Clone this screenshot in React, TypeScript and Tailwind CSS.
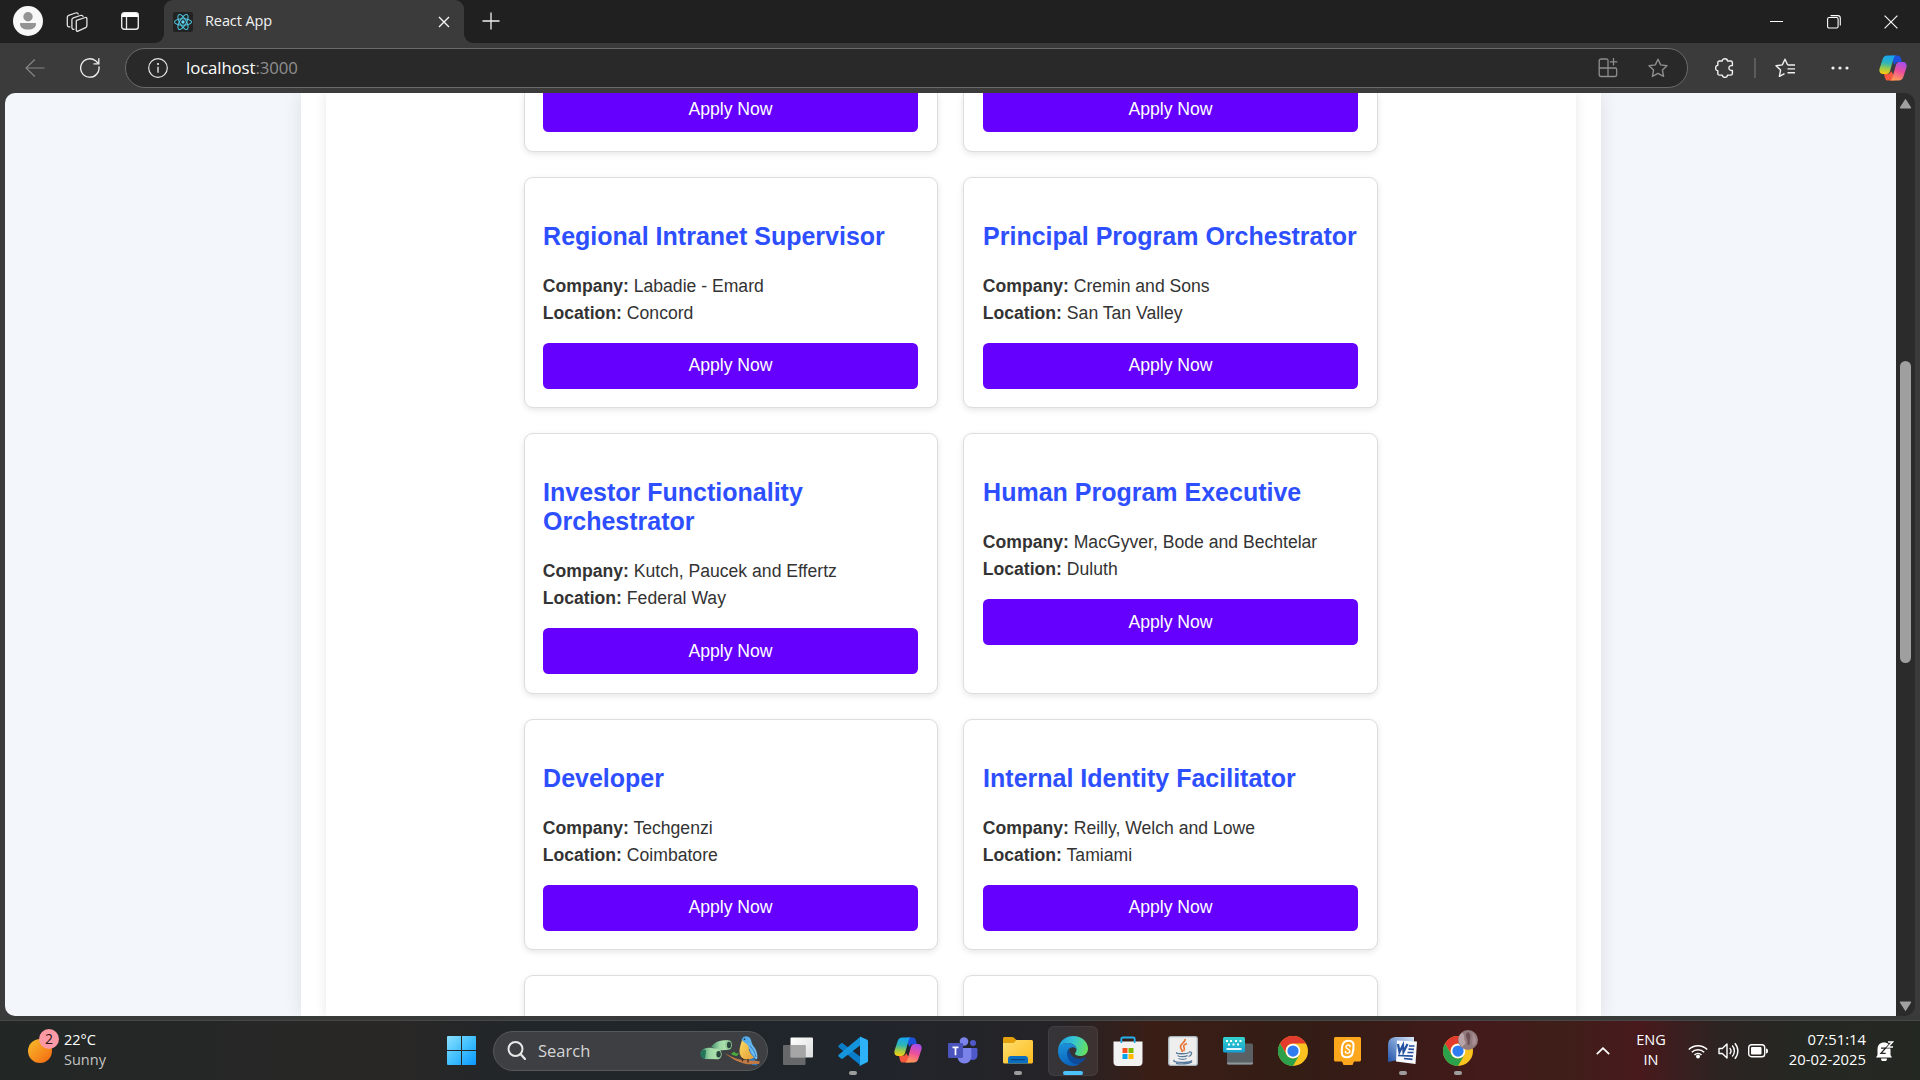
import React from "react";

type IconProps = { w: number; h: number; vb?: string; className?: string; children: React.ReactNode };

function Svg({ w, h, vb, className, children }: IconProps) {
  return (
    <svg width={w} height={h} viewBox={vb ?? `0 0 ${w} ${h}`} fill="none" className={className}>
      {children}
    </svg>
  );
}

function CopilotIcon({ size, id }: { size: number; id: string }) {
  return (
    <Svg w={size} h={size * 0.93} vb="0 0 28 26">
      <defs>
        <linearGradient id={id + "a"} x1="0.4" y1="0" x2="0.3" y2="1">
          <stop offset="0" stopColor="#17a5f2" />
          <stop offset="0.4" stopColor="#2fb5b8" />
          <stop offset="0.7" stopColor="#9ccb48" />
          <stop offset="1" stopColor="#ffcc10" />
        </linearGradient>
        <linearGradient id={id + "b"} x1="0.7" y1="0" x2="0.4" y2="1">
          <stop offset="0" stopColor="#a44ef0" />
          <stop offset="0.5" stopColor="#ee4f9a" />
          <stop offset="1" stopColor="#ff9b56" />
        </linearGradient>
      </defs>
      <path d="M12 .5h7c1.600 0 2.300 1 2.800 2.600L22.800 7h-3.500c-2 0-3 1-3.600 3L14 7Z" fill="#1d50dc" />
      <path d="M16 25.500H9c-1.700 0-2.500-1-3-2.600L5 19h3.500c2 0 3-1 3.600-3L14 19Z" fill="#f4583d" />
      <path d="M8.500.5H17c-1.500.4-2.100 1.800-2.600 3.500l-3.200 11.500C10.500 18 9.300 19 7.300 19H4.200C1 19-.2 16.800.6 13.400L3.500 4.500C4.300 1.800 5.800.5 8.500.5Z" fill={`url(#${id}a)`} />
      <path d="M19.500 25.500H11c1.500-.4 2.100-1.800 2.600-3.500l3.200-11.500C17.500 8 18.700 7 20.700 7h3.100c3.200 0 4.400 2.200 3.600 5.600l-2.900 8.900c-.8 2.700-2.300 4-5 4Z" fill={`url(#${id}b)`} />
    </Svg>
  );
}

function ReactLogo() {
  return (
    <span className="flex h-5 w-5 items-center justify-center rounded-[2px] bg-[#222222]">
      <Svg w={20} h={20} vb="-10 -10 20 20">
        <g stroke="#4fc3dc" strokeWidth="1.1">
          <ellipse rx="8.500" ry="3.300" />
          <ellipse rx="8.500" ry="3.300" transform="rotate(60)" />
          <ellipse rx="8.500" ry="3.300" transform="rotate(120)" />
        </g>
        <circle r="1.700" fill="#61dafb" />
      </Svg>
    </span>
  );
}

function TabStrip() {
  return (
    <div className="flex h-[43px] items-center bg-[#202020] text-[#f2f2f2]">
      <div className="flex w-14 justify-center pb-px">
        <Svg w={30} h={30}>
          <circle cx="15" cy="15" r="15" fill="#f8f8f8" />
          <circle cx="15" cy="10.700" r="4.700" fill="#939393" />
          <path d="M8 17h14c.6 0 1 .4 1 1 0 3.500-3 5.500-8 5.500S7 21.500 7 18c0-.6.4-1 1-1Z" fill="#939393" />
        </Svg>
      </div>
      <div className="flex w-[43px] justify-center pr-px">
        <Svg w={22} h={22}>
          <g stroke="#e4e4e4" strokeWidth="1.300" strokeLinejoin="round">
            <path d="m10.500 9.300 8.800-2.800c.9-.3 1.600.2 1.600 1.100v7.200c0 .9-.5 1.600-1.300 1.900l-7.600 3.400c-1 .4-1.700 0-1.700-1v-8.300c0-.7.100-1.200.2-1.500Z" />
            <path d="M8.500 18.200c-1.300.4-2.600-.2-2.600-1.600V8.800c0-1 .6-1.600 1.400-1.900l7-2.400c1.500-.5 2.700.1 2.800 1.500" />
            <path d="M4.300 15.700c-1.700.5-3-.2-3-1.700V6.300c0-1 .5-1.600 1.400-1.900L9.500 2c1.500-.5 2.700.1 2.800 1.500" />
          </g>
        </Svg>
      </div>
      <div className="flex w-[65px] justify-center pb-px pr-[4px]">
        <Svg w={18} h={18}>
          <rect x=".7" y=".7" width="16.600" height="16.600" rx="2.500" stroke="#e8e8e8" strokeWidth="1.400" />
          <path d="M1 3.200C1 2 2 1 3.200 1h11.600C16 1 17 2 17 3.200V5H1Z" fill="#fff" />
          <path d="M5.500 5v12" stroke="#e8e8e8" strokeWidth="1.300" />
        </Svg>
      </div>
      <div className="relative flex h-full w-[300px] items-center rounded-t-[9px] bg-[#3b3b3b] pl-[9px] pr-3.5">
        <Svg w={10} h={10} className="absolute -left-2.5 bottom-0">
          <path d="M10 0v10H0c6 0 10-4 10-10Z" fill="#3b3b3b" />
        </Svg>
        <Svg w={10} h={10} className="absolute -right-2.5 bottom-0">
          <path d="M0 0v10h10C4 10 0 6 0 0Z" fill="#3b3b3b" />
        </Svg>
        <ReactLogo />
        <span className="ml-3 flex-1 pb-[2px] text-[14.500px] leading-5 tracking-[-0.1px]">React App</span>
        <Svg w={12} h={12}>
          <path d="m1 1 10 10M11 1 1 11" stroke="#f5f5f5" strokeWidth="1.400" />
        </Svg>
      </div>
      <div className="flex w-[53px] justify-center pb-px">
        <Svg w={18} h={18}>
          <path d="M9 .5v17M.5 9h17" stroke="#f0f0f0" strokeWidth="1.300" />
        </Svg>
      </div>
      <div className="ml-auto flex items-center">
        <div className="flex w-[57px] justify-center">
          <Svg w={13} h={13}>
            <path d="M0 6.500h13" stroke="#fff" strokeWidth="1" />
          </Svg>
        </div>
        <div className="flex w-[57px] justify-center">
          <Svg w={14} h={14}>
            <rect x=".6" y="2.500" width="10.500" height="10.500" rx="1.500" stroke="#fff" strokeWidth="1.100" />
            <path d="M3.500.6h7.400c1.400 0 2.400 1 2.400 2.400v7.500" stroke="#fff" strokeWidth="1.100" />
          </Svg>
        </div>
        <div className="flex w-[58px] justify-center">
          <Svg w={14} h={14}>
            <path d="m.6.6 12.800 12.800M13.400.6.6 13.400" stroke="#f5f5f5" strokeWidth="1.200" />
          </Svg>
        </div>
      </div>
    </div>
  );
}

const STAR = "M10 1.200 12.700 6.900 19 7.700 14.400 12 15.600 18.400 10 15.300 4.400 18.400 5.600 12 1 7.700 7.300 6.900Z";

function Toolbar() {
  return (
    <div className="flex h-[50px] items-center bg-[#3b3b3b]">
      <div className="flex w-[70px] justify-center">
        <Svg w={20} h={20}>
          <path d="M19.500 10H1M9.800 1.500 1 10l8.800 8.500" stroke="#858585" strokeWidth="1.200" />
        </Svg>
      </div>
      <div className="flex w-[40px] justify-center">
        <Svg w={20} h={20}>
          <path d="M18.900 8.300A9.200 9.200 0 1 1 15.600 2.800L18.500 5.500" stroke="#f0f0f0" strokeWidth="1.300" />
          <path d="M18.800.3v5.500h-5.300" stroke="#f0f0f0" strokeWidth="1.300" />
        </Svg>
      </div>
      <div className="ml-[15px] flex h-10 w-[1563px] items-center rounded-full border border-[#6b6b6b] bg-[#292929] pl-[22px] pr-[19px]">
        <Svg w={20} h={20}>
          <circle cx="10" cy="10" r="9.300" stroke="#e6e6e6" strokeWidth="1.200" />
          <circle cx="10" cy="6" r="1.100" fill="#e6e6e6" />
          <path d="M10 8.700v6" stroke="#e6e6e6" strokeWidth="1.400" />
        </Svg>
        <span className="ml-[18px] flex-1 pb-px text-[16.800px] leading-6 tracking-[-0.1px] text-white">
          localhost<span className="text-[#8f8f8f]">:3000</span>
        </span>
        <Svg w={20} h={20} className="mr-[30px]">
          <path d="M9 1H3.200C2 1 1.200 1.800 1.200 3v13.500c0 1.200.8 2 2 2h13.500c1.200 0 2-.8 2-2v-5c0-1-.6-1.500-1.500-1.500H1.200M10 10v8.500M10 10V2.500C10 1.500 9.500 1 8.500 1" stroke="#8d8d8d" strokeWidth="1.300" />
          <path d="M15.500 0v7.500M11.800 3.800h7.500" stroke="#8d8d8d" strokeWidth="1.300" />
        </Svg>
        <Svg w={20} h={20}>
          <path d={STAR} stroke="#8d8d8d" strokeWidth="1.400" strokeLinejoin="round" />
        </Svg>
      </div>
      <div className="flex w-[72px] justify-center pl-px">
        <Svg w={20} h={20}>
          <path
            d="M4.500 3H7.300C7.300 1.500 8.500.7 9.900.7S12.500 1.500 12.500 3h3.200c1 0 1.700.7 1.700 1.700v2.800c-1.800-.2-3.500.7-3.500 2.500s1.700 2.700 3.500 2.500v2.900c0 1-.7 1.700-1.700 1.700h-3.200c0 1.500-1.200 2.300-2.600 2.300s-2.600-.8-2.600-2.300H4.500c-1 0-1.700-.7-1.700-1.700v-2.800C1.400 12.600.6 11.400.6 10s.8-2.600 2.200-2.600V4.700C2.800 3.700 3.500 3 4.500 3Z"
            stroke="#f0f0f0"
            strokeWidth="1.400"
            strokeLinejoin="round"
          />
        </Svg>
      </div>
      <div className="ml-[-6px] h-5 w-0.5 bg-[#5c5c5c]" />
      <div className="ml-[19px]">
        <Svg w={21} h={20}>
          <path
            d="M12.700 7 10 1.200 7.300 6.900 1 7.700 5.600 12 4.400 18.400 9.500 15.600M12.700 7h7.300M12.500 10.900h7.500M12.500 14.800h7.500"
            stroke="#f0f0f0"
            strokeWidth="1.400"
            strokeLinejoin="round"
          />
        </Svg>
      </div>
      <div className="ml-[35px]">
        <Svg w={18} h={4}>
          <circle cx="2" cy="2" r="1.600" fill="#f0f0f0" />
          <circle cx="9" cy="2" r="1.600" fill="#f0f0f0" />
          <circle cx="16" cy="2" r="1.600" fill="#f0f0f0" />
        </Svg>
      </div>
      <div className="ml-[30px]">
        <CopilotIcon size={28} id="top" />
      </div>
    </div>
  );
}

type Job = { title: string; company: string; location: string; raised?: boolean };

function JobCard({ job }: { job: Job }) {
  return (
    <div className="flex flex-col rounded-[9px] border border-[#dddddd] bg-white pb-[18px] pl-[18px] pt-[44px] shadow-[0_2px_6px_rgba(0,0,0,0.1)] even:pl-[19px]">
      <h3 className="w-[376px] pl-[0.600px] text-[25px] font-bold leading-[29px] text-[#2d4fff]">{job.title}</h3>
      <div className="mt-[22px] pl-[0.300px] text-[17.600px] leading-[27px] text-[#333333]">
        <p>
          <strong>Company:</strong> {job.company}
        </p>
        <p>
          <strong>Location:</strong> {job.location}
        </p>
      </div>
      <button
        className={
          job.raised
            ? "mt-4 h-[46px] w-[375px] shrink-0 rounded-[5.500px] bg-[#6500ff] pb-[2px] pl-px text-center text-[17.600px] leading-[20px] text-white"
            : "mt-4 h-[46px] w-[375px] shrink-0 rounded-[5.500px] bg-[#6500ff] pl-px text-center text-[17.600px] leading-[20px] text-white"
        }
      >
        Apply Now
      </button>
    </div>
  );
}

const JOBS: Job[] = [
  { title: "Regional Intranet Supervisor", company: "Labadie - Emard", location: "Concord", raised: true },
  { title: "Principal Program Orchestrator", company: "Cremin and Sons", location: "San Tan Valley", raised: true },
  { title: "Investor Functionality Orchestrator", company: "Kutch, Paucek and Effertz", location: "Federal Way" },
  { title: "Human Program Executive", company: "MacGyver, Bode and Bechtelar", location: "Duluth" },
  { title: "Developer", company: "Techgenzi", location: "Coimbatore", raised: true },
  { title: "Internal Identity Facilitator", company: "Reilly, Welch and Lowe", location: "Tamiami", raised: true },
];

function CardTail() {
  return (
    <div className="flex flex-col justify-end rounded-b-[9px] border border-t-0 border-[#dddddd] bg-white pb-[19px] pl-[18px] shadow-[0_2px_6px_rgba(0,0,0,0.1)] even:pl-[19px]">
      <button className="h-[39px] w-[375px] rounded-b-[5.500px] bg-[#6500ff] pb-[7px] pl-px text-center text-[17.600px] leading-[20px] text-white">
        Apply Now
      </button>
    </div>
  );
}

function CardHead() {
  return <div className="rounded-t-[9px] border border-b-0 border-[#dddddd] bg-white shadow-[0_2px_6px_rgba(0,0,0,0.1)]" />;
}

function Page() {
  return (
    <main className="flex h-full flex-1 justify-center overflow-hidden rounded-l-[10px] bg-[#f3f7fc]">
      <div className="w-[1300px] bg-white px-[25px] shadow-[0_0_17px_rgba(0,0,0,0.1)]">
        <div className="h-full bg-white px-[198px] shadow-[0_0_11px_rgba(0,0,0,0.1)]">
          <div className="grid h-full grid-cols-[414px_415px] grid-rows-[59px_231px_261px_231px_80px] gap-x-[25px] gap-y-[25px] font-['Liberation_Sans',Arial,sans-serif]">
            <CardTail />
            <CardTail />
            {JOBS.map((job) => (
              <JobCard key={job.title} job={job} />
            ))}
            <CardHead />
            <CardHead />
          </div>
        </div>
      </div>
    </main>
  );
}

function ScrollBar() {
  return (
    <div className="flex h-full w-[19px] flex-col items-center rounded-r-[10px] bg-[#2b2b2b]">
      <Svg w={13} h={11} className="mt-[5px]">
        <path d="M6.500.8 12 9.300c.3.600 0 1.200-.7 1.200H1.700c-.7 0-1-.6-.7-1.200Z" fill="#a0a0a0" />
      </Svg>
      <div className="mt-[252px] h-[302px] w-[11px] rounded-full bg-[#9f9f9f]" />
      <Svg w={13} h={11} className="mb-[4px] mt-auto">
        <path d="M6.500 10.200 12 1.700c.3-.6 0-1.200-.7-1.200H1.700c-.7 0-1 .6-.7 1.200Z" fill="#a0a0a0" />
      </Svg>
    </div>
  );
}

function StartIcon() {
  return (
    <Svg w={29} h={29}>
      <defs>
        <linearGradient id="start" x1="0" y1="0" x2="29" y2="29" gradientUnits="userSpaceOnUse">
          <stop stopColor="#8be0ff" />
          <stop offset=".5" stopColor="#42c0ff" />
          <stop offset="1" stopColor="#0a98ff" />
        </linearGradient>
      </defs>
      <path d="M1 0h13v14H0V1a1 1 0 0 1 1-1ZM15 0h13a1 1 0 0 1 1 1v13H15ZM0 15h14v14H1a1 1 0 0 1-1-1ZM15 15h14v13a1 1 0 0 1-1 1H15Z" fill="url(#start)" />
    </Svg>
  );
}

function BirdArt() {
  return (
    <Svg w={60} h={32}>
      <defs>
        <linearGradient id="bino" x1="0" y1="0" x2="1" y2="0">
          <stop stopColor="#3f8f68" />
          <stop offset=".5" stopColor="#9bd6a5" />
          <stop offset="1" stopColor="#b5e8b0" />
        </linearGradient>
        <linearGradient id="belly" x1="0" y1="0" x2="1" y2="1">
          <stop stopColor="#f9dc62" />
          <stop offset="1" stopColor="#e59a35" />
        </linearGradient>
        <linearGradient id="wing" x1="0" y1="0" x2="1" y2="1">
          <stop stopColor="#4aa3e6" />
          <stop offset="1" stopColor="#7cc4f2" />
        </linearGradient>
      </defs>
      <path d="M11 12C15 6 21 5 28 5.200v9.600l-8 .7Z" fill="url(#bino)" />
      <ellipse cx="28.500" cy="10" rx="3.400" ry="4.800" fill="#8fc797" />
      <ellipse cx="29" cy="10" rx="2" ry="3.200" fill="#28443c" />
      <path d="M1.500 16c3-4.500 9-3.500 17-2v10.200L5 24c-4-1-5-4.500-3.500-8Z" fill="url(#bino)" />
      <path d="M1 16.500c2-2 4-2 5-1l-1 8.500c-4-.6-5.500-4-4-7.500Z" fill="#24745a" />
      <ellipse cx="18" cy="19.300" rx="3.600" ry="5" fill="#a5dba8" />
      <ellipse cx="18.600" cy="19.300" rx="2.200" ry="3.300" fill="#28443c" />
      <path d="M51 20c3 2 5 6 6.500 10.500L52 30l-4-7Z" fill="#2a78c4" />
      <path d="M25 18.500c6 2.500 10 5.500 18 6.500 6 .5 11 .3 17 1.500l-1 2.500c-6-.5-9 .8-13 0-8-1.500-15-6-21-10.500Z" fill="#c07a45" />
      <path d="m31 19 3-2.500 2 2 3-.5-2 3-3-.6Z" fill="#4cae38" />
      <path d="M42 5c-1 4-2.500 7-2.500 11 0 5 3 8.500 7.500 8.500 4 0 7-1.500 8-3L50 6Z" fill="url(#belly)" />
      <path d="M41.500 4.500C43-.3 50 .2 51 5c.6 3 1.500 5 3.500 7.500 2.500 3.500 3.500 8 2.500 12-4-2-7-6-8-11-.5-2.500-1.500-4-3-5-1.500-.8-3-2-4.500-4Z" fill="url(#wing)" />
      <path d="M50 11c3 3 5 6 6 11M49 14c1 4 3 6 6 8.500" stroke="#2a6fb5" strokeWidth=".8" />
      <path d="m41.500 4.500-1.500-3.500 3 1.500Z" fill="#3b4a58" />
      <circle cx="44.500" cy="4.300" r=".8" fill="#152c47" />
      <path d="M42.500 23v3.500M48 24v3.500" stroke="#4a2e22" strokeWidth="1.300" />
    </Svg>
  );
}

function TaskViewIcon() {
  return (
    <Svg w={30} h={28}>
      <defs>
        <linearGradient id="tv" x1="0" y1="0" x2="1" y2="1">
          <stop stopColor="#fff" />
          <stop offset="1" stopColor="#dcdcdc" />
        </linearGradient>
      </defs>
      <rect x="7.500" y=".5" width="22.500" height="20" rx="1" fill="url(#tv)" />
      <rect x="0" y="8" width="22.500" height="20" rx="1" fill="#777" fillOpacity=".82" />
      <path d="M7.500 8h15v12.500h-15Z" fill="#a6a6a6" />
    </Svg>
  );
}

function VsCodeIcon() {
  return (
    <Svg w={30} h={30}>
      <path d="M.6 9.500 3 7.400c.6-.5 1.300-.4 1.900 0L22 20.500V29L.7 11.200c-.6-.5-.6-1.200-.1-1.700Z" fill="#0b7dc8" />
      <path d="M.6 20.500 3 22.600c.6.500 1.300.4 1.900 0L22 9.500V1L.7 18.800c-.6.500-.6 1.200-.1 1.700Z" fill="#1494dc" />
      <path d="M22 .4 28.700 3.400c.8.4 1.300 1 1.300 1.900v19.400c0 .9-.5 1.500-1.300 1.900L22 29.800c-.5.100-1 0-1.300-.3.700.3 1.300-.1 1.300-.9Z" fill="#2db1f7" />
    </Svg>
  );
}

function TeamsIcon() {
  return (
    <Svg w={30} h={27}>
      <circle cx="25" cy="6" r="3" fill="#5059c9" />
      <circle cx="16" cy="4.500" r="4.300" fill="#7b83eb" />
      <path d="M20 11h8c1 0 1.500.6 1.500 1.500V18c0 3-2 5-5 5-2 0-3.500-1-4.500-3Z" fill="#5059c9" />
      <path d="M10 11h12c.9 0 1.400.6 1.400 1.400V19c0 4.500-3 7.500-7 7.500s-7-3-7-7.500Z" fill="#7b83eb" />
      <rect x="0" y="6" width="15" height="15" rx="1.200" fill="#4b53bc" />
      <path d="M4.500 10.300h6M7.500 10.300v8" stroke="#fff" strokeWidth="1.700" />
    </Svg>
  );
}

function FolderIcon() {
  return (
    <Svg w={30} h={27}>
      <defs>
        <linearGradient id="fold" x1="0" y1="0" x2="1" y2="1">
          <stop stopColor="#ffdf70" />
          <stop offset="1" stopColor="#fdbb1c" />
        </linearGradient>
      </defs>
      <path d="M0 1.500C0 .7.700 0 1.500 0H9c1 0 1.600.3 2.200.9L13.500 3H28c1.200 0 2 .8 2 2v5H0Z" fill="#e5a00d" />
      <path d="M0 6h9.500c1 0 1.600-.3 2.200-1L13.500 3H28c1.200 0 2 .8 2 2v20c0 .8-.7 1.500-1.500 1.500h-27C.7 26.500 0 25.800 0 25Z" fill="url(#fold)" />
      <path d="M5 26.500V22c0-1.700 1-3 2.800-3h14.400c1.800 0 2.800 1.300 2.800 3v4.500Z" fill="#0d6fc2" />
      <path d="M8.500 22.700h13" stroke="#06457f" strokeWidth="1.300" strokeLinecap="round" />
    </Svg>
  );
}

function EdgeIcon() {
  return (
    <Svg w={30} h={30}>
      <defs>
        <linearGradient id="e1" x1="0" y1=".3" x2="1" y2=".5">
          <stop stopColor="#1b9de2" />
          <stop offset=".5" stopColor="#36c6d3" />
          <stop offset="1" stopColor="#66e05e" />
        </linearGradient>
        <linearGradient id="e2" x1=".3" y1="0" x2=".5" y2="1">
          <stop stopColor="#1c93dc" />
          <stop offset="1" stopColor="#0b62ba" />
        </linearGradient>
      </defs>
      <path d="M0 14C1 5.500 7 0 15 0c9 0 15 6 15 12.500 0 5-3.500 7.500-7.500 7.500-3.500 0-5.500-1.200-5.500-2.500 0-.8 1.500-1.500 1.500-4C18.500 9.500 14 7 9.500 7 4.500 7 1 10 0 14Z" fill="url(#e1)" />
      <path d="M0 15C0 10 4 7 9.500 7c5 0 9 3 9 6.500-1-1.700-3-2.500-5-2-4 1-5 5-3.500 9 2 5 7 7.500 11.500 7.500-2 1.300-4 2-6.500 2C6.500 30 0 23.500 0 15Z" fill="url(#e2)" />
      <path d="M11 13c-4 5-1 12.500 5 15 3.500 1 8-1 11.300-5.500.4-.6 0-1-.7-.7-6 3-14.600.2-15.600-8.800Z" fill="#0d4c9c" />
    </Svg>
  );
}

function StoreIcon() {
  return (
    <Svg w={30} h={30}>
      <path d="M.5 5.500h29V26c0 2.500-1.500 4-4 4h-21c-2.500 0-4-1.500-4-4Z" fill="#f2f2f2" />
      <path d="M8.300 7V3c0-1 .6-1.500 1.500-1.500h10.400c.9 0 1.500.5 1.500 1.500v4" stroke="#28b0ee" strokeWidth="1.800" />
      <path d="M9.500 12h5v5h-5Z" fill="#f25022" />
      <path d="M15.500 12h5v5h-5Z" fill="#7fba00" />
      <path d="M9.500 18h5v5h-5Z" fill="#00a4ef" />
      <path d="M15.500 18h5v5h-5Z" fill="#ffb900" />
    </Svg>
  );
}

function JavaIcon() {
  return (
    <Svg w={30} h={30}>
      <rect x=".7" y=".7" width="28.600" height="28.600" rx="2" fill="#eeeeee" stroke="#a8b6bd" strokeWidth="1.300" />
      <path d="M17 3c1 3-5 4.500-4.500 8 .2 1.600 2 3 1.500 5M19 7.500c-3 1-4 2.500-3 4 .8 1.200.5 2.500-.5 3.700" stroke="#e8773a" strokeWidth="1.700" />
      <path d="M9 16.500c-3 1.500 9 1.800 12 .2M9.500 19.500c1 1.500 8 1.500 10 0M10.500 22.500c2 1 6 1 8 0M21 16c4-.5 3 3.500-.5 4.500M6.500 24c-5 2.500 15 3.500 17.500.5M8 27.300c5 1 13 .6 16-1.300" stroke="#58799b" strokeWidth="1.300" />
    </Svg>
  );
}

function KeyboardIcon() {
  return (
    <Svg w={30} h={28}>
      <defs>
        <linearGradient id="kb" x1="0" y1="0" x2="0" y2="1">
          <stop stopColor="#34d4cf" />
          <stop offset="1" stopColor="#159ed0" />
        </linearGradient>
      </defs>
      <rect x="4" y="6.500" width="26" height="21" rx="1.500" fill="#5a6064" />
      <path d="M4 25.500h26V26a1.500 1.500 0 0 1-1.500 1.500h-23A1.500 1.500 0 0 1 4 26Z" fill="#8d969b" />
      <rect width="22" height="15.500" rx="1.500" fill="url(#kb)" />
      <path d="M3 4h2M7 4h2M12 4h2M16.500 4h2M5 7.500h2M9.500 7.500h2M14 7.500h2" stroke="#fff" strokeWidth="2" />
      <path d="M3.500 12h15" stroke="#fff" strokeWidth="1.800" />
    </Svg>
  );
}

function ChromeIcon() {
  return (
    <Svg w={30} h={30} vb="0 0 48 48">
      <circle cx="24" cy="24" r="24" fill="#fbc31f" />
      <path d="M3.200 12A24 24 0 0 1 44.800 12H24A12 12 0 0 0 13.600 30Z" fill="#e33b2e" />
      <path d="M3.200 12 13.600 30A12 12 0 0 0 34.400 30L24 48A24 24 0 0 1 3.200 12Z" fill="#2da04b" />
      <circle cx="24" cy="24" r="11.600" fill="#fff" />
      <circle cx="24" cy="24" r="9" fill="#2f7cf0" />
    </Svg>
  );
}

function ScratchIcon() {
  return (
    <Svg w={27} h={28}>
      <path d="M1.500 0h24c.8 0 1.500.7 1.500 1.500V23c0 .8-.7 1.500-1.500 1.500H20L18.500 28h-9L8 24.500H1.500C.7 24.500 0 23.800 0 23V1.500C0 .7.700 0 1.500 0Z" fill="#fea61c" />
      <path d="M10.500 4.800c3.500-2 8.500-1.300 9 2.400.3 4-.3 7.500-1.300 10.300-1.500 3.300-8.700 3.700-10 .3-.8-3.300-.8-10.300 2.300-13Z" stroke="#fff" strokeWidth="2" />
      <path d="M16 7.800v2.400M16 8.700c-1.700-1.300-4-.4-4 1.300 0 2.600 4 1.800 4 4.300 0 2-3 2.500-4.500 1.200v-1.800" stroke="#fff" strokeWidth="1.400" />
    </Svg>
  );
}

function WordIcon() {
  return (
    <Svg w={30} h={30}>
      <defs>
        <linearGradient id="wd" x1="1" y1="0" x2="0" y2="1">
          <stop stopColor="#dce8f8" />
          <stop offset=".55" stopColor="#6d93cf" />
          <stop offset="1" stopColor="#2454a8" />
        </linearGradient>
      </defs>
      <path d="M7 1h19v5l-16 18-10 2V10C0 4 2 2 7 1Z" fill="url(#wd)" />
      <path d="m9 4.500 20 1-1.500 22.500L8 25.500Z" fill="#f7f9fc" />
      <path d="m10 8 1.500 8L15 9l.5 7L19.500 8" stroke="#2450a0" strokeWidth="2.200" />
      <path d="M21 10h5.500M20.500 13.200l5.500.2M19.500 16.500h6M10 19.500l15 .7M16 22.500l8.500.9" stroke="#2450a0" strokeWidth="1.700" />
    </Svg>
  );
}

function ChromeProfileIcon() {
  return (
    <span className="relative block">
      <ChromeIcon />
      <Svg w={20} h={20} className="absolute left-[15.500px] top-[-6px]">
        <circle cx="10" cy="10" r="10" fill="#927b7e" />
        <path d="M4 3c4 2 1 6 3 8s-1 4-3 6C0 13-1 6 4 3Z" fill="#b9a5a8" />
        <path d="M10 2c2 1 3 4 2 7s1 4-1 6c-2 1-1-3-2-6s-2-5 1-7Z" fill="#6d4f54" />
        <path d="M14 3c3 2 5 6 4 10l-3 3c-2-4 1-8-1-13Z" fill="#a98f92" />
      </Svg>
    </span>
  );
}

function TaskCell({ children, active, running }: { children: React.ReactNode; active?: boolean; running?: boolean }) {
  return (
    <div className="flex w-[55px] justify-center">
      <div
        className={
          active
            ? "relative flex h-[50px] w-[50px] items-center justify-center rounded-[6px] border border-white/5 bg-white/8"
            : "relative flex h-[50px] w-[50px] items-center justify-center"
        }
      >
        {children}
        {active && <span className="absolute bottom-0 left-[14px] h-1 w-5 rounded-full bg-[#4cc2ff]" />}
        {running && <span className="absolute bottom-px left-[21px] h-1 w-2 rounded-full bg-[#9d9d9d]" />}
      </div>
    </div>
  );
}

function SystemTray() {
  return (
    <div className="ml-auto flex h-full items-center text-white">
      <Svg w={14} h={8}>
        <path d="m.8 7.200 6.200-6 6.200 6" stroke="#fff" strokeWidth="1.800" />
      </Svg>
      <div className="ml-[26px] w-[30px] pb-px text-center text-[14.500px] leading-5">
        <div className="-mx-2">ENG</div>
        <div>IN</div>
      </div>
      <Svg w={20} h={16} className="ml-[22px]">
        <path d="M.8 6.500a13 13 0 0 1 18.400 0M3.800 9.300a8.800 8.800 0 0 1 12.400 0M6.500 12a5 5 0 0 1 7 0" stroke="#fff" strokeWidth="1.500" />
        <circle cx="10" cy="13.600" r="2" fill="#fff" />
      </Svg>
      <Svg w={21} h={18} className="ml-[10px]">
        <path d="M1 6.500h3.300L9 2v14l-4.700-4.500H1Z" stroke="#fff" strokeWidth="1.400" strokeLinejoin="round" />
        <path d="M11.700 6a4.500 4.500 0 0 1 0 6M14.200 3.500a8 8 0 0 1 0 11M16.800 1.200a11.500 11.500 0 0 1 0 15.600" stroke="#fff" strokeWidth="1.400" />
      </Svg>
      <Svg w={20} h={14} className="ml-[9px]">
        <rect x=".7" y=".7" width="16" height="12" rx="2.800" stroke="#fff" strokeWidth="1.400" />
        <rect x="3" y="3" width="10.500" height="7.500" rx="1" fill="#fff" />
        <path d="M18 4.500c1.500.3 2 1 2 2.500s-.5 2.200-2 2.500Z" fill="#fff" />
      </Svg>
      <div className="ml-[19px] w-[79px] whitespace-nowrap pb-[3px] text-right text-[14.800px] leading-5">
        <div>07:51:14</div>
        <div className="-ml-3">20-02-2025</div>
      </div>
      <Svg w={18} h={20} className="ml-[10px] mr-[26px]">
        <path d="M1.500 14V8.500C1.500 4 4 1.500 8 1.500S14.500 4 14.500 8.500V14l1.500 2.500H0Z" fill="#fff" />
        <path d="M5 17.500h6a3 3 0 0 1-6 0Z" fill="#fff" />
        <path d="M5 7.200h4.500L5 12.300h4.700" stroke="#252525" strokeWidth="1.300" />
        <path d="M12 1h4.500L12 6h5" stroke="#252525" strokeWidth="3" />
        <path d="M12 1h4.500L12 6h5" stroke="#fff" strokeWidth="1.400" />
      </Svg>
    </div>
  );
}

function Taskbar() {
  return (
    <footer className="flex h-[59px] items-center bg-[linear-gradient(90deg,#222726_0px,#262726_250px,#292726_400px,#21262a_520px,#20252b_850px,#252327_1060px,#3a1e16_1150px,#331d15_1300px,#3a1b17_1400px,#441a1b_1480px,#3e1e18_1560px,#48191c_1640px,#2c2422_1720px,#252722_1800px,#242823_1920px)]">
      <div className="flex w-[433.500px] items-center pl-7 text-[14.500px] leading-5">
        <div className="relative mr-[12px] h-6 w-6 rounded-full bg-linear-to-br from-[#f5bd2c] to-[#f36310]">
          <span className="absolute -top-[10px] left-[11px] flex h-5 w-5 items-center justify-center rounded-full bg-[#fd99a4] text-[14px] leading-none text-[#2a1416]">
            2
          </span>
        </div>
        <div className="pb-[2px]">
          <div className="text-white">22°C</div>
          <div className="text-[#c4c4c4]">Sunny</div>
        </div>
      </div>
      <TaskCell>
        <StartIcon />
      </TaskCell>
      <div className="ml-[4.500px] mr-[2px] flex h-10 w-[275px] items-center rounded-full border border-[#56585a] bg-[#3d3f42] pl-[13px] pr-[7px]">
        <Svg w={19} h={19}>
          <circle cx="8.500" cy="8" r="7" stroke="#e8e8e8" strokeWidth="2" />
          <path d="m13.500 13 4.500 5" stroke="#e8e8e8" strokeWidth="2.200" strokeLinecap="round" />
        </Svg>
        <span className="ml-[12px] flex-1 text-[16.500px] leading-6 text-[#d6d6d6]">Search</span>
        <BirdArt />
      </div>
      <TaskCell>
        <TaskViewIcon />
      </TaskCell>
      <TaskCell running>
        <VsCodeIcon />
      </TaskCell>
      <TaskCell>
        <CopilotIcon size={28} id="task" />
      </TaskCell>
      <TaskCell>
        <TeamsIcon />
      </TaskCell>
      <TaskCell running>
        <FolderIcon />
      </TaskCell>
      <TaskCell active>
        <EdgeIcon />
      </TaskCell>
      <TaskCell>
        <StoreIcon />
      </TaskCell>
      <TaskCell>
        <JavaIcon />
      </TaskCell>
      <TaskCell>
        <KeyboardIcon />
      </TaskCell>
      <TaskCell>
        <ChromeIcon />
      </TaskCell>
      <TaskCell>
        <ScratchIcon />
      </TaskCell>
      <TaskCell running>
        <WordIcon />
      </TaskCell>
      <TaskCell running>
        <ChromeProfileIcon />
      </TaskCell>
      <SystemTray />
    </footer>
  );
}

export default function App() {
  return (
    <div className="flex h-[1080px] w-[1920px] flex-col overflow-hidden bg-[#3b3b3b] font-['Open_Sans','Noto_Sans',sans-serif]">
      <TabStrip />
      <Toolbar />
      <div className="flex h-[923px] pl-[5px] pr-[5px]">
        <Page />
        <ScrollBar />
      </div>
      <div className="h-[5px] border-b border-[#474747] bg-[#383a39]" />
      <Taskbar />
    </div>
  );
}
